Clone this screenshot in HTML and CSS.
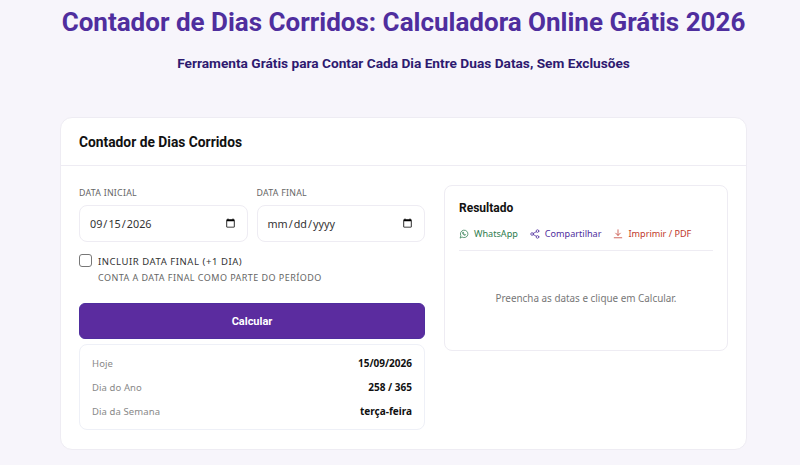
FILE: index.html
```html
<!DOCTYPE html>
<html lang="pt-BR">
<head>
<meta charset="utf-8">
<title>Contador de Dias Corridos</title>
<link rel="stylesheet" href="styles.css">
</head>
<body>
<header class="hero">
  <h1>Contador de Dias Corridos: Calculadora Online Grátis 2026</h1>
  <p class="subtitle">Ferramenta Grátis para Contar Cada Dia Entre Duas Datas, Sem Exclusões</p>
</header>
<main class="card">
  <div class="card-head"><h2>Contador de Dias Corridos</h2></div>
  <div class="card-body">
    <section class="form-col">
      <div class="date-row">
        <label class="field"><span class="field-label">DATA INICIAL</span><input class="date" type="date" value="2026-09-15"></label>
        <label class="field"><span class="field-label">DATA FINAL</span><input class="date empty" type="date"></label>
      </div>
      <label class="check-row">
        <input class="check" type="checkbox">
        <span class="check-text"><span class="check-title">INCLUIR DATA FINAL (+1 DIA)</span><span class="check-sub">CONTA A DATA FINAL COMO PARTE DO PERÍODO</span></span>
      </label>
      <button class="calc" type="button">Calcular</button>
      <div class="info">
        <div class="info-row"><span class="info-key">Hoje</span><span class="info-val">15/09/2026</span></div>
        <div class="info-row"><span class="info-key">Dia do Ano</span><span class="info-val">258 / 365</span></div>
        <div class="info-row"><span class="info-key">Dia da Semana</span><span class="info-val">terça-feira</span></div>
      </div>
    </section>
    <section class="result">
      <h3>Resultado</h3>
      <div class="actions">
        <a class="action green"><svg viewBox="0 0 24 24" class="ico"><path d="M3 21l1.400-5A9 9 0 1 1 8 19.700z"/><path d="M9 8c-.8.7-.8 2 .1 3.600 1 1.700 2.600 3.100 4.400 3.400 1.200.2 2-.4 2.300-1.400l-2-1.200-.9.9c-1-.4-2-1.400-2.500-2.500l.8-.9-1-2z"/></svg>WhatsApp</a>
        <a class="action purple"><svg viewBox="0 0 24 24" class="ico"><circle cx="18" cy="5" r="3.200"/><circle cx="5" cy="12" r="3.200"/><circle cx="18" cy="19" r="3.200"/><path d="M8 10.400l7.200-3.800M8 13.600l7.200 3.800"/></svg>Compartilhar</a>
        <a class="action red"><svg viewBox="0 0 24 24" class="ico"><path d="M12 2v13M6.500 10l5.500 5.500 5.500-5.500M3 21h18"/></svg>Imprimir / PDF</a>
      </div>
      <p class="placeholder">Preencha as datas e clique em Calcular.</p>
    </section>
  </div>
</main>
</body>
</html>
```
FILE: styles.css
```css
* { box-sizing: border-box; }
html, body { margin: 0; height: 465px; overflow: hidden; }
html { background: #f7f5fb; }
body { width: 747px; padding-left: 60px; background: #f7f5fb; font-family: "Noto Sans", "Open Sans", sans-serif; color: #111; }
.hero { text-align: center; height: 117px; padding-top: 5px; white-space: nowrap; }
h1 { margin: 0; font: 700 26px/34px Roboto, sans-serif; color: #4f2e9e; }
.subtitle { margin: 13px 0 0; font: 700 13.700px/22px Roboto, sans-serif; color: #2e1a70; }
.card { width: 687px; height: 333px; background: #fff; border: 1px solid #eeecf3; border-radius: 12px; }
.card-head { height: 48px; padding: 0 18px; display: flex; align-items: center; border-bottom: 1px solid #eeecf3; }
h2 { margin: 0; font: 700 13.800px/20px Roboto, sans-serif; color: #111; }
.card-body { display: flex; gap: 19px; padding: 19px 18px 0; align-items: flex-start; }
.form-col { width: 346px; display: flex; flex-direction: column; }
.date-row { display: flex; gap: 9px; }
.field { width: 169px; display: flex; flex-direction: column; }
.field-label { font-size: 8.800px; line-height: 14px; letter-spacing: .25px; color: #666; padding-top: 1px; height: 15px; margin-bottom: 5px; }
.date { width: 100%; height: 37px; padding: 0 9px; border: 1px solid #eeecf3; border-radius: 8px; background: #fff; font: 10.800px "Noto Sans", sans-serif; color: #333; }
.check-row { display: flex; gap: 6px; margin-top: 12px; }
.check { appearance: none; width: 13px; height: 13px; margin: 0; border: 1px solid #777; border-radius: 3px; background: #fff; flex: none; }
.check-text { display: flex; flex-direction: column; padding-top: 1px; }
.check-title { font-size: 9.500px; line-height: 14px; letter-spacing: .55px; color: #333; }
.check-sub { font-size: 9px; line-height: 14px; letter-spacing: .45px; color: #666; margin-top: 2px; }
.calc { height: 36px; margin-top: 18px; border: 1px solid #4f2e9e; border-radius: 6px; background: #5b2c9f; color: #fff; font: 700 11px Roboto, sans-serif; }
.info { margin-top: 5px; height: 86px; padding: 6px 12px; border: 1px solid #eef0f7; border-radius: 8px; display: flex; flex-direction: column; justify-content: space-between; }
.info-row { display: flex; justify-content: space-between; align-items: center; height: 24px; font-size: 9.500px; }
.info-key { color: #888; letter-spacing: .1px; }
.info-val { font-size: 10px; font-weight: 700; color: #111; }
.result { width: 284px; height: 166px; padding: 12px 14px; border: 1px solid #eeecf3; border-radius: 8px; }
h3 { margin: 0; font: 700 12px/20px Roboto, sans-serif; color: #111; }
.actions { display: flex; gap: 12px; margin-top: 9px; padding-bottom: 9px; border-bottom: 1px solid #eeecf3; }
.action { display: flex; align-items: center; gap: 5px; font-size: 9.100px; line-height: 14px; }
.ico { width: 10px; height: 10px; fill: none; stroke: currentColor; stroke-width: 1.800; stroke-linecap: round; stroke-linejoin: round; }
.green { color: #2e7d4f; }
.purple { color: #4f2e9e; }
.red { color: #c0392b; }
.placeholder { margin: 40px 0 0; text-align: center; font-size: 9.900px; line-height: 14px; color: #777; }
```
